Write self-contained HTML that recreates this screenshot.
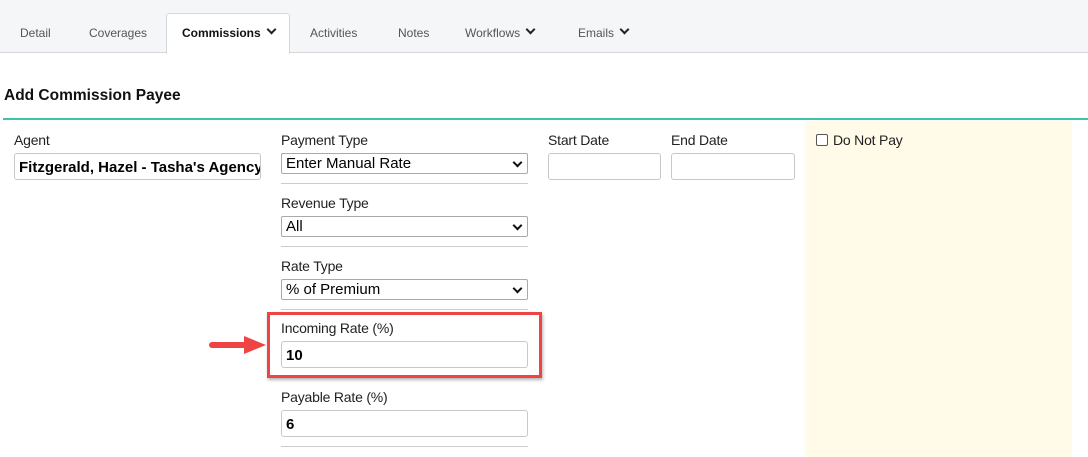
<!DOCTYPE html>
<html><head><style>
*{box-sizing:border-box;margin:0;padding:0}
body{width:1088px;height:457px;background:#fff;position:relative;overflow:hidden;font-family:"Liberation Sans",sans-serif;color:#222}
.a{position:absolute}
.tabs{left:0;top:0;width:1088px;height:53px;background:#f5f6f8;border-bottom:1px solid #d6d8dc}
.tab{position:absolute;top:26px;font-size:12px;color:#555}
.lbl{position:absolute;font-size:14px;color:#222;letter-spacing:-0.2px}
.inp{position:absolute;border:1px solid #c8c8c8;border-radius:3px;background:#fff;font-size:15px;font-weight:bold;color:#000;padding:5px 0 0 4px}
.sel{position:absolute;border:1px solid #aaa;border-radius:2px;background:#fff;font-size:15px;color:#000;padding:1px 0 0 4px;height:21px}
.sel:after{content:"";position:absolute;right:6px;top:5px;width:5px;height:5px;border-right:2px solid #111;border-bottom:2px solid #111;transform:rotate(45deg)}
.hr{position:absolute;left:281px;width:247px;height:1px;background:#ccc}
.chev{display:inline-block;width:7px;height:7px;border-right:2px solid #222;border-bottom:2px solid #222;transform:rotate(45deg);margin-left:7px;position:relative;top:-4px}
</style></head><body>
<div class="a tabs"></div>
<div class="a" style="left:166px;top:13px;width:124px;height:41px;background:#fff;border:1px solid #d6d8dc;border-bottom:none;border-radius:3px 3px 0 0"></div>
<div class="tab" style="left:20px">Detail</div>
<div class="tab" style="left:89px">Coverages</div>
<div class="tab" style="left:182px;color:#111;font-weight:bold">Commissions<span class="chev"></span></div>
<div class="tab" style="left:310px">Activities</div>
<div class="tab" style="left:398px">Notes</div>
<div class="tab" style="left:465px">Workflows<span class="chev"></span></div>
<div class="tab" style="left:578px">Emails<span class="chev"></span></div>
<div class="a" style="left:4px;top:87px;font-size:15.5px;font-weight:bold;color:#111">Add Commission Payee</div>
<div class="a" style="left:3px;top:118px;width:1085px;height:2px;background:#3cc4a8"></div>
<div class="a" style="left:805px;top:121px;width:267px;height:336px;background:#fffbe8"></div>

<div class="lbl" style="left:14px;top:132px">Agent</div>
<div class="inp" style="left:14px;top:153px;width:247px;height:27px;white-space:nowrap;overflow:hidden">Fitzgerald, Hazel - Tasha's Agency</div>

<div class="lbl" style="left:281px;top:132px">Payment Type</div>
<div class="sel" style="left:281px;top:153px;width:247px">Enter Manual Rate</div>
<div class="hr" style="top:183px"></div>
<div class="lbl" style="left:281px;top:195px">Revenue Type</div>
<div class="sel" style="left:281px;top:216px;width:247px">All</div>
<div class="hr" style="top:246px"></div>
<div class="lbl" style="left:281px;top:258px">Rate Type</div>
<div class="sel" style="left:281px;top:279px;width:247px">% of Premium</div>
<div class="hr" style="top:309px"></div>
<div class="a" style="left:267px;top:312px;width:275px;height:66px;border:3px solid #ee4444;box-shadow:1px 2px 3px rgba(0,0,0,.3)"></div>
<div class="lbl" style="left:281px;top:320px">Incoming Rate (%)</div>
<div class="inp" style="left:281px;top:341px;width:247px;height:27px">10</div>
<div class="lbl" style="left:281px;top:389px">Payable Rate (%)</div>
<div class="inp" style="left:281px;top:410px;width:247px;height:27px">6</div>
<div class="hr" style="top:446px"></div>
<svg class="a" style="left:206px;top:333px" width="62" height="24"><path d="M6 12 L42 12" stroke="#ee4444" stroke-width="6" stroke-linecap="round"/><path d="M38 3 L60 12 L38 21 Z" fill="#ee4444"/></svg>

<div class="lbl" style="left:548px;top:132px">Start Date</div>
<div class="inp" style="left:548px;top:153px;width:113px;height:27px"></div>
<div class="lbl" style="left:671px;top:132px">End Date</div>
<div class="inp" style="left:671px;top:153px;width:124px;height:27px"></div>
<div class="a" style="left:816px;top:134px;width:12px;height:12px;border:1px solid #555;border-radius:2px;background:#fff"></div>
<div class="lbl" style="left:833px;top:132px">Do Not Pay</div>
</body></html>
